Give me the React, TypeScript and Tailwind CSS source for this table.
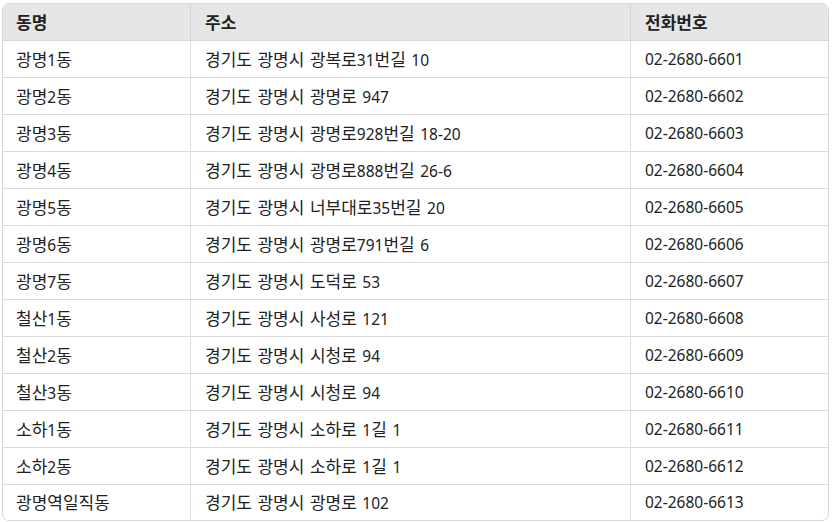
const rows = [
  ["광명1동", "경기도 광명시 광복로31번길 10", "02-2680-6601"],
  ["광명2동", "경기도 광명시 광명로 947", "02-2680-6602"],
  ["광명3동", "경기도 광명시 광명로928번길 18-20", "02-2680-6603"],
  ["광명4동", "경기도 광명시 광명로888번길 26-6", "02-2680-6604"],
  ["광명5동", "경기도 광명시 너부대로35번길 20", "02-2680-6605"],
  ["광명6동", "경기도 광명시 광명로791번길 6", "02-2680-6606"],
  ["광명7동", "경기도 광명시 도덕로 53", "02-2680-6607"],
  ["철산1동", "경기도 광명시 사성로 121", "02-2680-6608"],
  ["철산2동", "경기도 광명시 시청로 94", "02-2680-6609"],
  ["철산3동", "경기도 광명시 시청로 94", "02-2680-6610"],
  ["소하1동", "경기도 광명시 소하로 1길 1", "02-2680-6611"],
  ["소하2동", "경기도 광명시 소하로 1길 1", "02-2680-6612"],
  ["광명역일직동", "경기도 광명시 광명로 102", "02-2680-6613"],
];

// hangul glyphs in the screenshot run wider than latin ones, so size them apart
const Txt = ({ text }: { text: string }) => {
  const parts = text.match(/[가-힣]+|[^가-힣]+/g) || [];
  return (
    <span className="whitespace-pre [word-spacing:1.5px]">
      {parts.map((p, i) =>
        /[가-힣]/.test(p) ? (
          <span key={i} className="text-[17px]">{p}</span>
        ) : (
          <span key={i}>{p}</span>
        )
      )}
    </span>
  );
};

const App = () => {
  return (
    <div className="pl-[2px] pt-[3px] bg-white font-['Noto_Sans','Noto_Sans_CJK_KR',sans-serif] text-[15.5px] leading-none text-[#222]">
      <div className="w-[827px] border border-[#d6d6d6] rounded-[7px] overflow-hidden">
        <div className="grid grid-cols-[188px_440px_1fr] h-[37px] bg-[#e6e6e6] border-b border-[#d6d6d6] font-bold">
          <div className="pl-[13px] pt-[1px] flex items-center border-r border-[#d6d6d6]"><Txt text="동명" /></div>
          <div className="pl-[14px] pt-[1px] flex items-center border-r border-[#d6d6d6]"><Txt text="주소" /></div>
          <div className="pl-[14px] pt-[1px] flex items-center"><Txt text="전화번호" /></div>
        </div>
        {rows.map(([dong, addr, tel], i) => (
          <div
            key={dong}
            className={`grid grid-cols-[188px_440px_1fr] ${i < rows.length - 1 ? "h-[37px] border-b border-[#dcdcdc]" : "h-[35px]"}`}
          >
            <div className="pl-[13px] pt-[1px] flex items-center border-r border-[#dcdcdc]"><Txt text={dong} /></div>
            <div className="pl-[14px] pt-[1px] flex items-center border-r border-[#dcdcdc]"><Txt text={addr} /></div>
            <div className="pl-[14px] pt-[1px] flex items-center"><Txt text={tel} /></div>
          </div>
        ))}
      </div>
    </div>
  );
};

export default App;
